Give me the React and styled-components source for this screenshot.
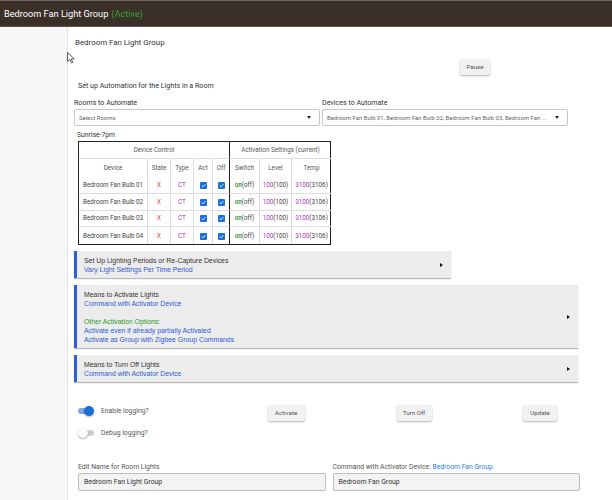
import React from "react";
import styled, { createGlobalStyle } from "styled-components";

const Global = createGlobalStyle`
  html, body { margin: 0; padding: 0; background: #fff; }
  body { font-family: Roboto, "Liberation Sans", Arial, sans-serif; color: #222; }
  * { box-sizing: border-box; }
`;

const Page = styled.div`
  position: relative;
  min-height: 500px;
  display: flex;
  flex-direction: column;
`;

const Header = styled.header`
  height: 27px;
  background: #3b2f2a;
  border-top: 1px solid #6d6560;
  border-bottom: 1px solid #5a504b;
  display: flex;
  align-items: center;
  padding-left: 4px;
  color: #fff;
  font-size: 9.2px;
`;

const Active = styled.span`
  color: #34a534;
  margin-left: 3px;
`;

const Body = styled.div`
  flex: 1;
  display: flex;
`;

const Sidebar = styled.aside`
  width: 68px;
  flex: none;
  background: #f7f7f7;
  border-right: 1px solid #e3e3e3;
`;

const Main = styled.main`
  flex: 1;
  padding: 0 32px 0 6px;
  display: flex;
  flex-direction: column;
`;

const Title = styled.div`
  margin-top: 9px;
  padding-left: 1px;
  font-size: 7.9px;
  line-height: 14px;
  color: #333;
`;

const PauseRow = styled.div`
  display: flex;
  justify-content: flex-end;
  padding-right: 90px;
  margin-top: 9px;
`;

const Button = styled.button`
  height: 16px;
  width: ${(p) => p.$w}px;
  padding: 0;
  border: none;
  border-radius: 2px;
  background: #f1f1f1;
  box-shadow: 0 1px 2px rgba(0, 0, 0, 0.3);
  font-family: Roboto, sans-serif;
  font-size: 6.2px;
  color: #555;
`;

const Subtitle = styled.div`
  margin-top: 4px;
  padding-left: 4px;
  font-size: 7.1px;
  line-height: 13px;
  color: #333;
`;

const SelectGrid = styled.div`
  display: grid;
  grid-template-columns: 246px 246px;
  column-gap: 2px;
  margin-top: 4px;
`;

const Label = styled.div`
  font-size: 7.1px;
  line-height: 13px;
  color: #333;
`;

const SelectBox = styled.div`
  height: 17px;
  border: 1px solid #c8c8c8;
  border-radius: 2px;
  display: flex;
  align-items: center;
  justify-content: space-between;
  padding: 0 8px 0 4px;
  font-size: 5.95px;
  color: #666;
  white-space: nowrap;
  overflow: hidden;
`;

const Caret = styled.span`
  width: 0;
  height: 0;
  border-left: 2.5px solid transparent;
  border-right: 2.5px solid transparent;
  border-top: 3px solid #222;
  flex: none;
  margin-left: 4px;
`;

const Period = styled.div`
  margin-top: 3px;
  padding-left: 3px;
  font-size: 6.8px;
  line-height: 12px;
  color: #333;
`;

const TableWrap = styled.div`
  margin-left: 4px;
  width: 253px;
  border: 1px solid #222;
`;

const Table = styled.table`
  width: 100%;
  table-layout: fixed;
  border-collapse: separate;
  border-spacing: 0;
  font-size: 6.3px;
  color: #444;
`;

const Cell = styled.td`
  height: ${(p) => p.$h || 16.8}px;
  padding: 0;
  padding-left: ${(p) => (p.$left ? 4 : 0)}px;
  text-align: ${(p) => (p.$left ? "left" : "center")};
  border-right: 1px solid ${(p) => (p.$sep ? "#222" : "#ddd")};
  border-bottom: 1px solid #ddd;
  color: ${(p) => p.$c || "#444"};
  font-weight: 400;
  white-space: nowrap;
  overflow: hidden;
  &:last-child { border-right: none; }
  tr:last-child > & { border-bottom: none; }
`;

const HeadCell = styled(Cell).attrs({ as: "th" })`
  color: #555;
`;

const On = styled.span`
  color: #1c8a1c;
  font-weight: 500;
`;

const Purple = styled.span`
  color: #a034b5;
`;

const CheckBox = styled.span`
  display: inline-flex;
  width: 7px;
  height: 7px;
  border-radius: 1px;
  background: #1a6fdc;
  align-items: center;
  justify-content: center;
  vertical-align: middle;
`;

const Panel = styled.div`
  margin-top: ${(p) => p.$mt}px;
  width: ${(p) => p.$w || "100%"};
  max-width: 504px;
  background: #ececec;
  border-left: 3px solid #2c5fd2;
  box-shadow: 0 1px 1px rgba(0, 0, 0, 0.28);
  display: flex;
  align-items: center;
  padding: 5px 8px 4px 7px;
  font-family: "Liberation Sans", Arial, sans-serif;
  font-size: 6.9px;
  line-height: 9px;
`;

const PanelBody = styled.div`
  flex: 1;
  display: flex;
  flex-direction: column;
`;

const PLine = styled.div`
  color: ${(p) => p.$c || "#333"};
  min-height: 9px;
`;

const Tri = styled.span`
  width: 0;
  height: 0;
  border-top: 2px solid transparent;
  border-bottom: 2px solid transparent;
  border-left: 3px solid #111;
  flex: none;
`;

const ControlGrid = styled.div`
  margin-top: 18px;
  display: grid;
  grid-template-columns: 148px 128px 128px 1fr;
  align-items: start;
`;

const ToggleCol = styled.div`
  display: flex;
  flex-direction: column;
  padding-left: 4px;
`;

const ToggleRow = styled.div`
  height: 22px;
  display: flex;
  align-items: center;
  gap: 7px;
  font-size: 6.8px;
  color: #555;
`;

const Track = styled.span`
  position: relative;
  width: 16px;
  height: 10px;
  display: inline-flex;
  align-items: center;
  &::before {
    content: "";
    position: absolute;
    left: ${(p) => (p.$on ? 0 : 3)}px;
    right: ${(p) => (p.$on ? 2 : 0)}px;
    height: 6px;
    border-radius: 3px;
    background: ${(p) => (p.$on ? "#7ea8e8" : "#cfcfcf")};
  }
  &::after {
    content: "";
    position: absolute;
    left: ${(p) => (p.$on ? 6 : 0)}px;
    width: 10px;
    height: 10px;
    border-radius: 50%;
    background: ${(p) => (p.$on ? "#1b6fd6" : "#fafafa")};
    box-shadow: 0 1px 2px rgba(0, 0, 0, 0.35);
  }
`;

const BtnCell = styled.div`
  display: flex;
  margin-top: 5px;
  justify-self: ${(p) => (p.$ml ? "start" : "center")};
  margin-left: ${(p) => p.$ml || 0}px;
`;

const InputGrid = styled.div`
  margin-top: 18px;
  padding-left: 4px;
  display: grid;
  grid-template-columns: 1fr 1fr;
  column-gap: 7px;
`;

const FieldLabel = styled.div`
  font-size: 6.8px;
  line-height: 11px;
  color: #555;
`;

const Link = styled.span`
  color: #2a7fe0;
`;

const Input = styled.div`
  height: 18px;
  background: #f3f3f3;
  border: 1px solid #bdbdbd;
  border-radius: 2px;
  display: flex;
  align-items: center;
  padding-left: 5px;
  font-size: 6.9px;
  color: #333;
`;

const Cursor = styled.svg`
  position: absolute;
  left: 67px;
  top: 52px;
`;

const Check = () => (
  <CheckBox>
    <svg width="5" height="5" viewBox="0 0 10 10">
      <path d="M1.5 5.2 L4 7.6 L8.6 2.6" fill="none" stroke="#fff" strokeWidth="1.8" />
    </svg>
  </CheckBox>
);

const bulbs = ["01", "02", "03", "04"];

export default function App() {
  return (
    <Page>
      <Global />
      <Header>
        Bedroom Fan Light Group<Active>(Active)</Active>
      </Header>
      <Body>
        <Sidebar />
        <Main>
          <Title>Bedroom Fan Light Group</Title>
          <PauseRow>
            <Button $w={30}>Pause</Button>
          </PauseRow>
          <Subtitle>Set up Automation for the Lights in a Room</Subtitle>
          <SelectGrid>
            <div>
              <Label>Rooms to Automate</Label>
              <SelectBox>
                <span>Select Rooms</span>
                <Caret />
              </SelectBox>
            </div>
            <div>
              <Label>Devices to Automate</Label>
              <SelectBox>
                <span>Bedroom Fan Bulb 01, Bedroom Fan Bulb 02, Bedroom Fan Bulb 03, Bedroom Fan ...</span>
                <Caret />
              </SelectBox>
            </div>
          </SelectGrid>
          <Period>Sunrise-7pm</Period>
          <TableWrap>
            <Table>
              <colgroup>
                <col style={{ width: 69 }} />
                <col style={{ width: 23 }} />
                <col style={{ width: 23 }} />
                <col style={{ width: 19 }} />
                <col style={{ width: 17 }} />
                <col style={{ width: 30 }} />
                <col style={{ width: 32 }} />
                <col style={{ width: 39 }} />
              </colgroup>
              <thead>
                <tr>
                  <HeadCell colSpan={5} $sep $h={17}>Device Control</HeadCell>
                  <HeadCell colSpan={3} $h={17}>Activation Settings (current)</HeadCell>
                </tr>
                <tr>
                  <HeadCell $h={18}>Device</HeadCell>
                  <HeadCell $h={18}>State</HeadCell>
                  <HeadCell $h={18}>Type</HeadCell>
                  <HeadCell $h={18}>Act</HeadCell>
                  <HeadCell $h={18} $sep>Off</HeadCell>
                  <HeadCell $h={18}>Switch</HeadCell>
                  <HeadCell $h={18}>Level</HeadCell>
                  <HeadCell $h={18}>Temp</HeadCell>
                </tr>
              </thead>
              <tbody>
                {bulbs.map((b) => (
                  <tr key={b}>
                    <Cell $left>Bedroom Fan Bulb {b}</Cell>
                    <Cell $c="#e53939">X</Cell>
                    <Cell $c="#a034b5">CT</Cell>
                    <Cell><Check /></Cell>
                    <Cell $sep><Check /></Cell>
                    <Cell><On>on</On>(off)</Cell>
                    <Cell><Purple>100</Purple>(100)</Cell>
                    <Cell><Purple>3100</Purple>(3106)</Cell>
                  </tr>
                ))}
              </tbody>
            </Table>
          </TableWrap>

          <Panel $mt={6} $w="377px">
            <PanelBody>
              <PLine>Set Up Lighting Periods or Re-Capture Devices</PLine>
              <PLine $c="#2f5bd8">Vary Light Settings Per Time Period</PLine>
            </PanelBody>
            <Tri />
          </Panel>
          <Panel $mt={7}>
            <PanelBody>
              <PLine>Means to Activate Lights</PLine>
              <PLine $c="#2f5bd8">Command with Activator Device</PLine>
              <PLine />
              <PLine $c="#2a9a2a">Other Activation Options:</PLine>
              <PLine $c="#2f5bd8">Activate even if already partially Activated</PLine>
              <PLine $c="#2f5bd8">Activate as Group with Zigbee Group Commands</PLine>
            </PanelBody>
            <Tri />
          </Panel>
          <Panel $mt={7}>
            <PanelBody>
              <PLine>Means to Turn Off Lights</PLine>
              <PLine $c="#2f5bd8">Command with Activator Device</PLine>
            </PanelBody>
            <Tri />
          </Panel>

          <ControlGrid>
            <ToggleCol>
              <ToggleRow>
                <Track $on />
                Enable logging?
              </ToggleRow>
              <ToggleRow>
                <Track />
                Debug logging?
              </ToggleRow>
            </ToggleCol>
            <BtnCell><Button $w={37}>Activate</Button></BtnCell>
            <BtnCell><Button $w={35}>Turn Off</Button></BtnCell>
            <BtnCell $ml={45}><Button $w={34}>Update</Button></BtnCell>
          </ControlGrid>

          <InputGrid>
            <div>
              <FieldLabel>Edit Name for Room Lights</FieldLabel>
              <Input>Bedroom Fan Light Group</Input>
            </div>
            <div>
              <FieldLabel>
                Command with Activator Device: <Link>Bedroom Fan Group</Link>
              </FieldLabel>
              <Input>Bedroom Fan Group</Input>
            </div>
          </InputGrid>
        </Main>
      </Body>
      <Cursor width="8" height="12" viewBox="0 0 8 12">
        <path d="M0.5 0.5 L0.5 9.5 L2.8 7.4 L4.4 11 L5.8 10.4 L4.3 6.9 L7.3 6.9 Z" fill="#fff" stroke="#333" strokeWidth="0.8" />
      </Cursor>
    </Page>
  );
}
